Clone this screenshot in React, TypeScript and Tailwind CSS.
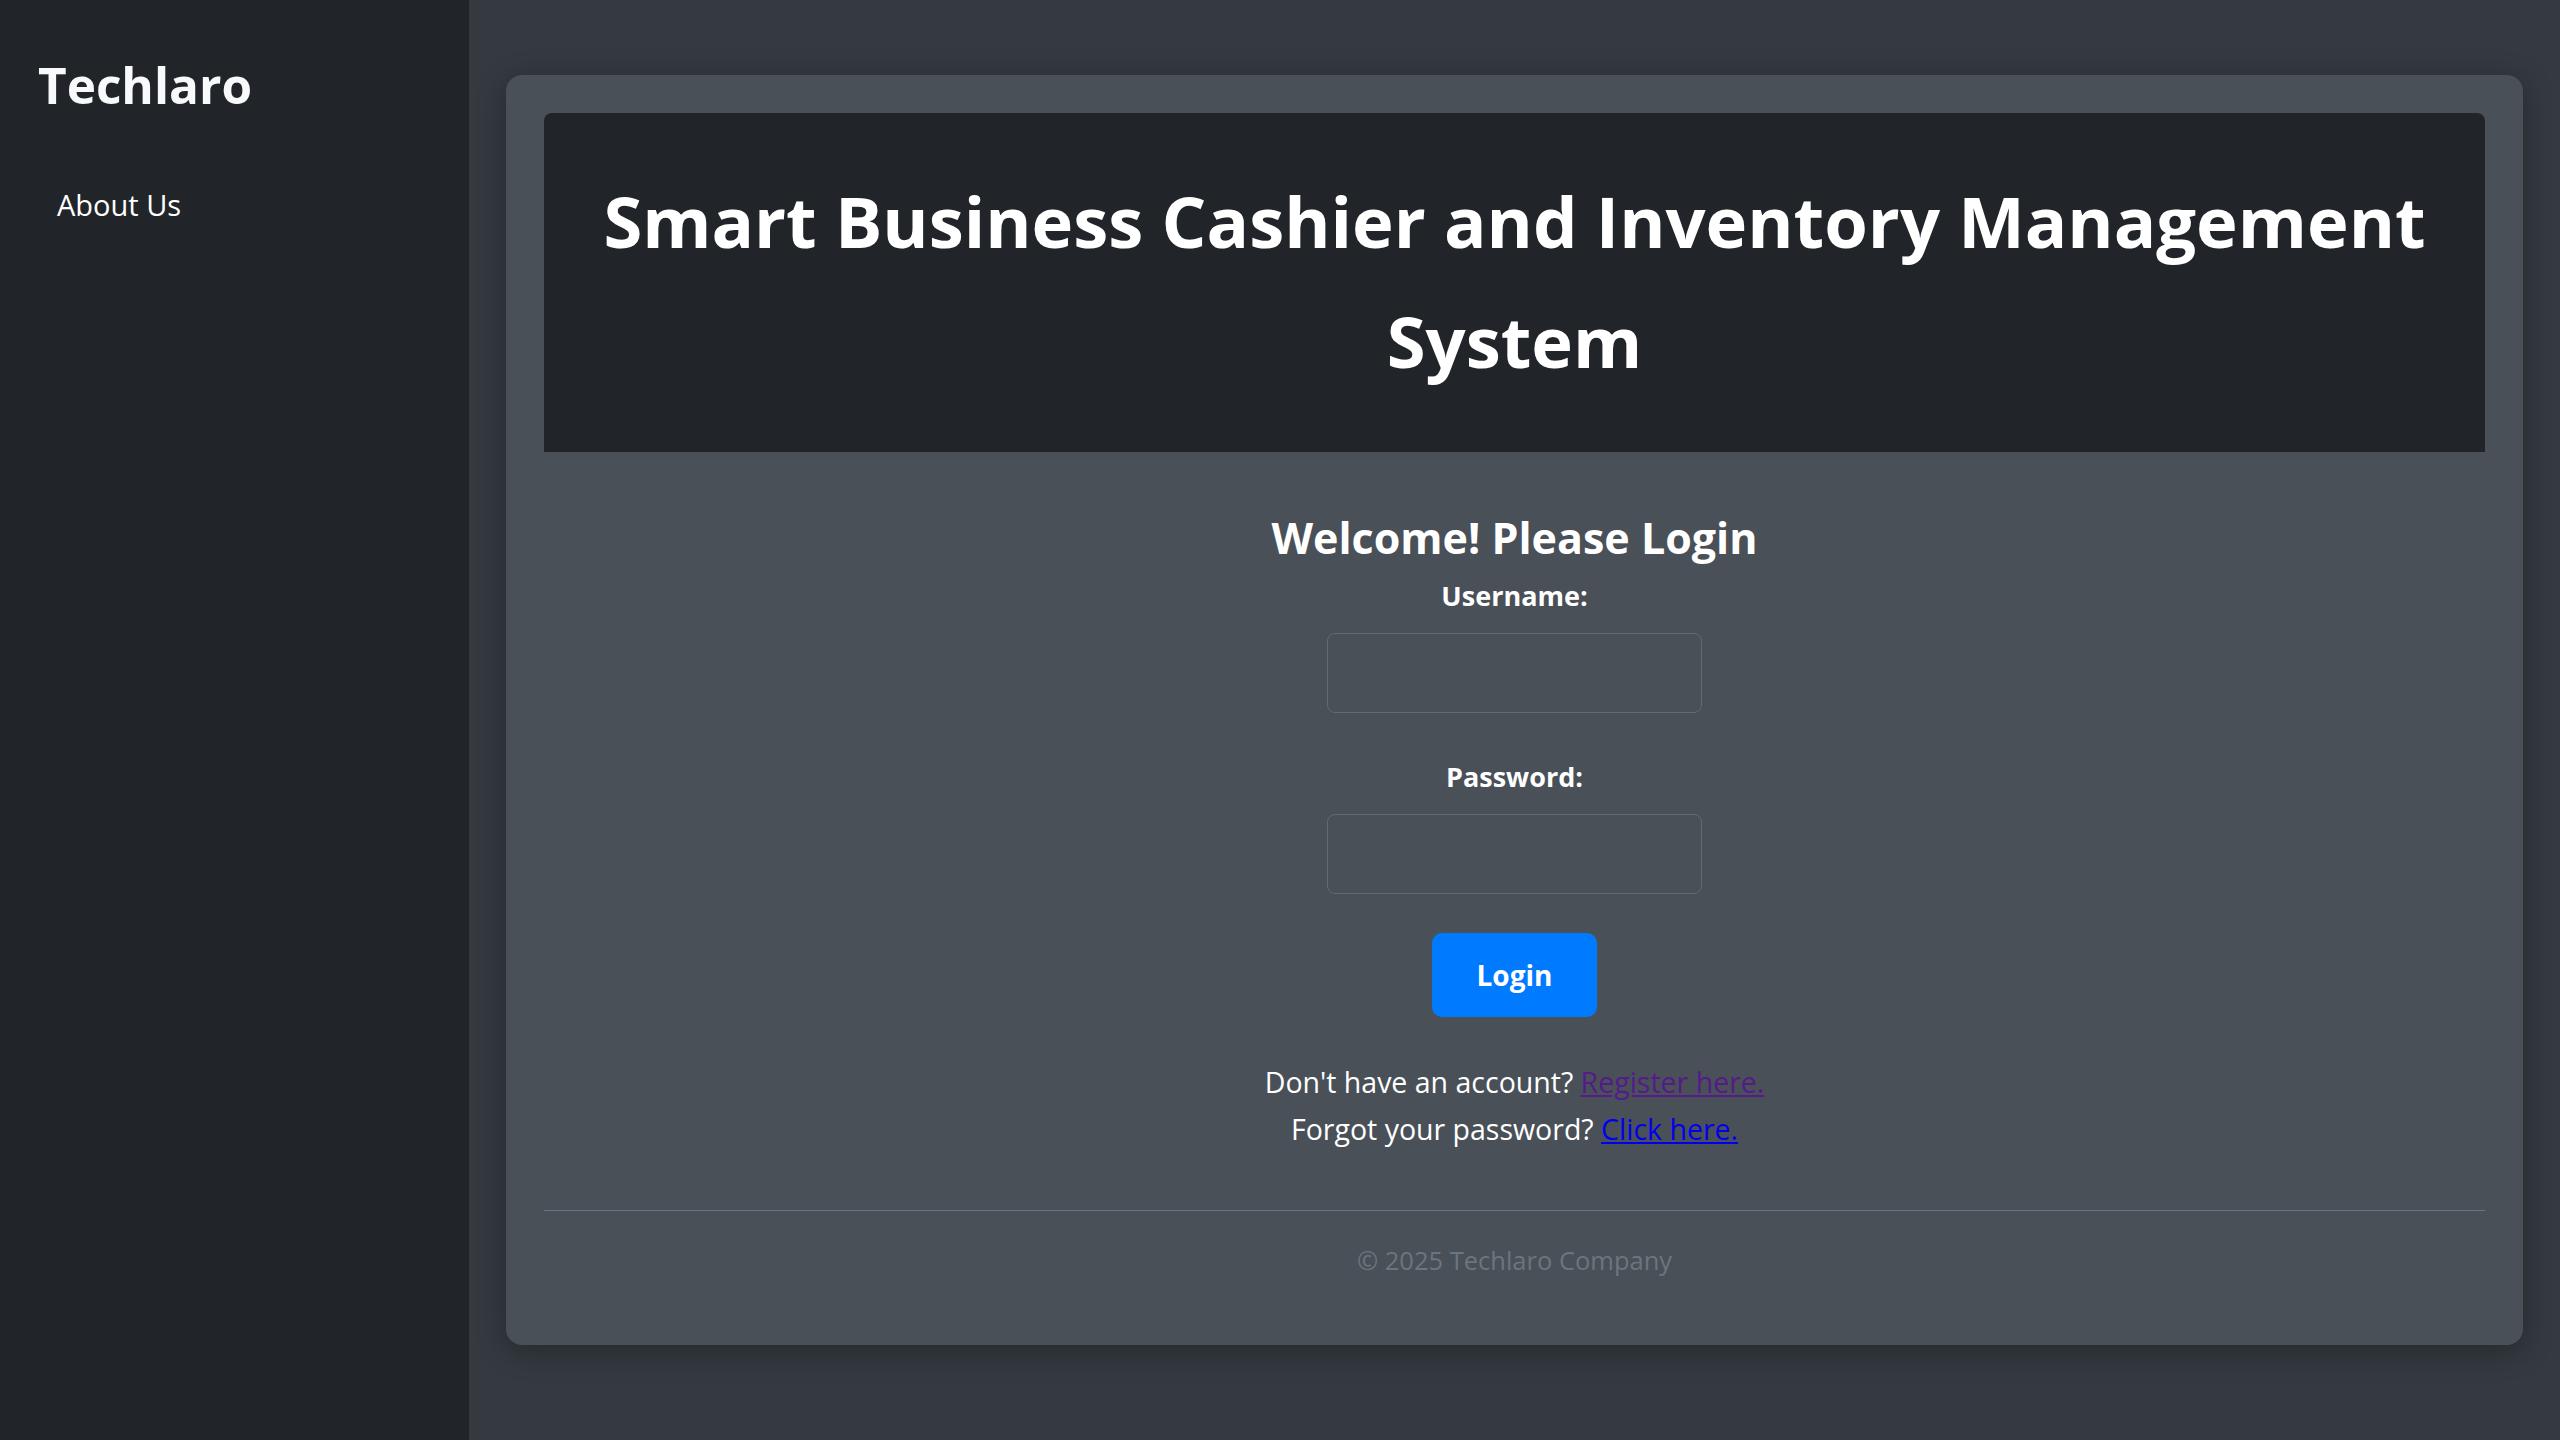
import React from "react";

const font = "font-['Open_Sans','Noto_Sans',sans-serif]";

function Sidebar() {
  return (
    <aside className="w-[469px] shrink-0 bg-[#212529] px-[38px] pt-[55px]">
      <h2 className="text-[49.5px] font-bold leading-[60px] text-[#f8f9fa]">Techlaro</h2>
      <nav className="mt-[68px] flex flex-col">
        <a href="#" className="pl-[19px] text-[29px] leading-[44px] text-white">
          About Us
        </a>
      </nav>
    </aside>
  );
}

function Field({ label, type, className }: { label: string; type: string; className?: string }) {
  return (
    <div className={`flex flex-col items-center ${className ?? ""}`}>
      <label className="text-[27px] font-bold leading-[38px] text-white">{label}</label>
      <input
        type={type}
        className="mt-[18px] h-[80px] w-[375px] rounded-[8px] border border-[#636a72] bg-[#495057] px-4 text-[26px] text-white outline-none"
      />
    </div>
  );
}

export default function App() {
  return (
    <div className={`flex min-h-screen bg-[#343a40] ${font}`}>
      <Sidebar />
      <main className="flex-1 px-[37px] pt-[75px]">
        <div className="rounded-[16px] bg-[#495057] p-[38px] shadow-[0_6px_30px_rgba(0,0,0,0.3)]">
          <header className="rounded-t-[8px] bg-[#212529] px-[24px] pt-[48px] pb-[51px] text-center">
            <h1 className="text-[70.5px] font-bold leading-[120px] text-white">
              Smart Business Cashier and Inventory Management System
            </h1>
          </header>

          <section className="mt-[60px] flex flex-col items-center">
            <h3 className="text-[43px] font-bold leading-[52px] text-white">Welcome! Please Login</h3>
            <form className="mt-[13px] flex flex-col items-center">
              <Field label="Username:" type="text" />
              <Field label="Password:" type="password" className="mt-[45px]" />
              <button
                type="button"
                className="mt-[39px] h-[84px] w-[165px] rounded-[10px] bg-[#007bff] text-[28px] font-bold text-white"
              >
                Login
              </button>
            </form>
            <div className="mt-[42px] text-center text-[28.5px] leading-[47px] text-white">
              <p>
                Don't have an account?{" "}
                <a href="#" className="text-[#551a8b] underline">
                  Register here.
                </a>
              </p>
              <p>
                Forgot your password?{" "}
                <a href="#" className="text-[#0000ee] underline">
                  Click here.
                </a>
              </p>
            </div>
          </section>

          <hr className="mt-[57px] border-t border-[#6c757d]" />
          <footer className="mt-[30px] mb-[28px] text-center text-[25.5px] leading-[38px] text-[#6c757d]">
            © 2025 Techlaro Company
          </footer>
        </div>
      </main>
    </div>
  );
}
